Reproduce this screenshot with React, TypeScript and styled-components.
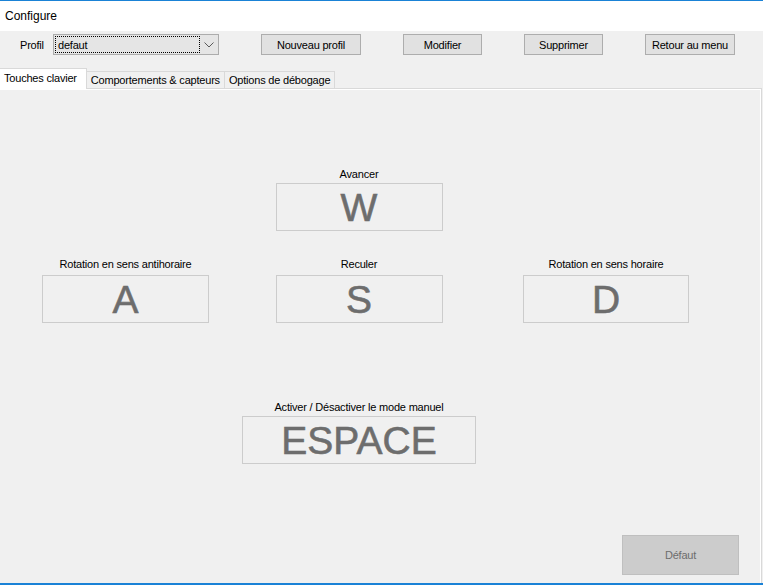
import React from "react";
import styled, { createGlobalStyle } from "styled-components";

const Global = createGlobalStyle`
  html, body { margin: 0; padding: 0; background: #f0f0f0; }
  body { font-family: "Liberation Sans", Arial, sans-serif; font-size: 11px; color: #000; letter-spacing: -0.2px; }
  * { box-sizing: border-box; }
`;

const Window = styled.div`
  width: 763px;
  height: 585px;
  display: flex;
  flex-direction: column;
  border-top: 1px solid #1a82d6;
  border-bottom: 2px solid #1a82d6;
  background: #f0f0f0;
  overflow: hidden;
`;

const TitleBar = styled.div`
  height: 30px;
  background: #ffffff;
  display: flex;
  align-items: center;
  padding-left: 5px;
  font-size: 12px;
  letter-spacing: 0;
  flex: none;
`;

const Body = styled.div`
  flex: 1;
  display: flex;
  flex-direction: column;
  min-height: 0;
`;

const Toolbar = styled.div`
  display: flex;
  align-items: center;
  padding: 3px 0 0 20px;
  height: 24px;
  gap: 42px;
  flex: none;
`;

const ProfileGroup = styled.div`
  display: flex;
  align-items: center;
`;

const Label = styled.span`
  width: 33px;
  font-size: 11px;
`;

const Combo = styled.div`
  width: 166px;
  height: 21px;
  background: #e5e5e5;
  border: 1px solid #acacac;
  display: flex;
  align-items: center;
  padding: 1px;
`;

const ComboValue = styled.div`
  width: 145px;
  height: 17px;
  border: 1px dotted #000;
  display: flex;
  align-items: center;
  padding-left: 2px;
  font-size: 11px;
`;

const Chevron = styled.div`
  flex: 1;
  display: flex;
  justify-content: center;
  align-items: center;
`;

const Button = styled.button<{ $w: number }>`
  width: ${(p) => p.$w}px;
  height: 21px;
  background: #e1e1e1;
  border: 1px solid #adadad;
  font-family: "Liberation Sans", Arial, sans-serif;
  font-size: 11px;
  letter-spacing: -0.2px;
  color: #000;
  padding: 0;
  margin: 0;
`;

const TabStrip = styled.div`
  display: flex;
  align-items: flex-end;
  margin-top: 13px;
  height: 21px;
  flex: none;
  position: relative;
  z-index: 1;
`;

const Tab = styled.div<{ $active?: boolean }>`
  height: ${(p) => (p.$active ? 21 : 18)}px;
  padding: 0 ${(p) => (p.$active ? 9 : 4)}px 0 4px;
  padding-bottom: ${(p) => (p.$active ? 2 : 0)}px;
  background: ${(p) => (p.$active ? "#ffffff" : "#f0f0f0")};
  border: 1px solid #d9d9d9;
  border-bottom: ${(p) => (p.$active ? "none" : "1px solid #d9d9d9")};
  border-left: ${(p) => (p.$active ? "none" : "1px solid #d9d9d9")};
  margin-left: ${(p) => (p.$active ? 0 : -1)}px;
  display: flex;
  align-items: center;
  font-size: 11px;
  white-space: nowrap;
`;

const Panel = styled.div`
  flex: 1;
  margin-top: -1px;
  margin-right: 1px;
  border-top: 1px solid #d9d9d9;
  border-right: 1px solid #d9d9d9;
  box-shadow: inset -1px 1px 0 #ffffff;
  display: flex;
  flex-direction: column;
  padding: 79px 0 8px 42px;
`;

const KeyGrid = styled.div`
  display: grid;
  grid-template-columns: 167px 33px 234px 47px 166px;
  grid-template-rows: auto auto auto;
  justify-items: center;
`;

const KeyBlock = styled.div<{ $col: number; $row: number; $top: number; $gap: number }>`
  grid-column: ${(p) => p.$col};
  grid-row: ${(p) => p.$row};
  margin-top: ${(p) => p.$top}px;
  display: flex;
  flex-direction: column;
  align-items: center;
  gap: ${(p) => p.$gap}px;
`;

const KeyLabel = styled.div`
  font-size: 11px;
  line-height: 13px;
  white-space: nowrap;
`;

const KeyBox = styled.div<{ $w: number }>`
  width: ${(p) => p.$w}px;
  height: 48px;
  border: 1px solid #cccccc;
  background: #f0f0f0;
  display: flex;
  align-items: center;
  justify-content: center;
  font-family: "Liberation Sans", Arial, sans-serif;
  font-size: 39px;
  letter-spacing: 0;
  color: #6d6d6d;
  -webkit-text-stroke: 0.6px #6d6d6d;
  padding-top: 2px;
`;

const Footer = styled.div`
  margin-top: auto;
  display: flex;
  justify-content: flex-end;
  padding-right: 22px;
`;

const DisabledButton = styled.button`
  width: 117px;
  height: 40px;
  background: #cccccc;
  border: 1px solid #bfbfbf;
  color: #6d6d6d;
  font-family: "Liberation Sans", Arial, sans-serif;
  font-size: 11px;
  letter-spacing: -0.2px;
  padding: 0;
`;

type KeyDef = { label: string; key: string; col: number; row: number; top: number; gap: number; w: number };

const keys: KeyDef[] = [
  { label: "Avancer", key: "W", col: 3, row: 1, top: 0, gap: 2, w: 167 },
  { label: "Rotation en sens antihoraire", key: "A", col: 1, row: 2, top: 27, gap: 4, w: 167 },
  { label: "Reculer", key: "S", col: 3, row: 2, top: 27, gap: 4, w: 167 },
  { label: "Rotation en sens horaire", key: "D", col: 5, row: 2, top: 27, gap: 4, w: 166 },
  { label: "Activer / Désactiver le mode manuel", key: "ESPACE", col: 3, row: 3, top: 78, gap: 2, w: 234 },
];

export default function App() {
  return (
    <>
      <Global />
      <Window>
        <TitleBar>Configure</TitleBar>
        <Body>
          <Toolbar>
            <ProfileGroup>
              <Label>Profil</Label>
              <Combo>
                <ComboValue>defaut</ComboValue>
                <Chevron>
                  <svg width="10" height="6" viewBox="0 0 10 6">
                    <path d="M0.5 0.5 L5 5 L9.5 0.5" fill="none" stroke="#5a5a5a" strokeWidth="1" />
                  </svg>
                </Chevron>
              </Combo>
            </ProfileGroup>
            <Button $w={100}>Nouveau profil</Button>
            <Button $w={79}>Modifier</Button>
            <Button $w={79}>Supprimer</Button>
            <Button $w={90}>Retour au menu</Button>
          </Toolbar>
          <TabStrip>
            <Tab $active>Touches clavier</Tab>
            <Tab>Comportements &amp; capteurs</Tab>
            <Tab>Options de débogage</Tab>
          </TabStrip>
          <Panel>
            <KeyGrid>
              {keys.map((k) => (
                <KeyBlock key={k.key} $col={k.col} $row={k.row} $top={k.top} $gap={k.gap}>
                  <KeyLabel>{k.label}</KeyLabel>
                  <KeyBox $w={k.w}>{k.key}</KeyBox>
                </KeyBlock>
              ))}
            </KeyGrid>
            <Footer>
              <DisabledButton disabled>Défaut</DisabledButton>
            </Footer>
          </Panel>
        </Body>
      </Window>
    </>
  );
}
